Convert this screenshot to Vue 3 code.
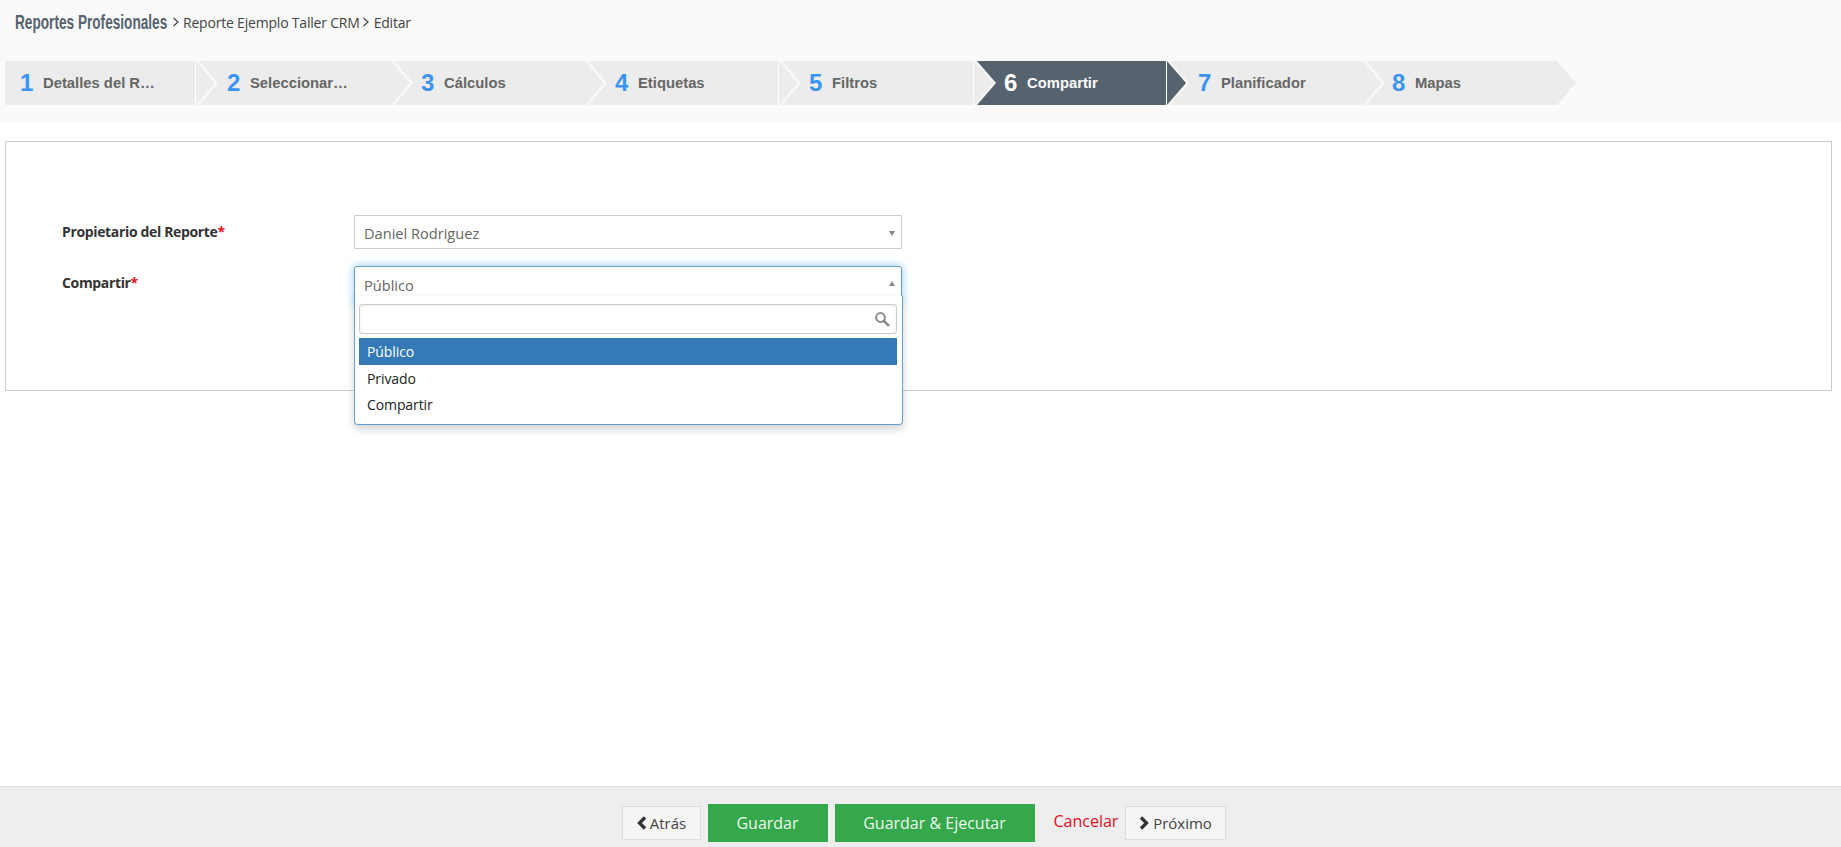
<script setup>
const steps = [
  { n: 1, label: 'Detalles del R…', width: 210, pad: 15, first: true, line: true },
  { n: 2, label: 'Seleccionar…', width: 211, pad: 28 },
  { n: 3, label: 'Cálculos', width: 210, pad: 27 },
  { n: 4, label: 'Etiquetas', width: 210, pad: 27, line: true },
  { n: 5, label: 'Filtros', width: 211, pad: 27, line: true },
  { n: 6, label: 'Compartir', width: 209, pad: 27, active: true, line: true },
  { n: 7, label: 'Planificador', width: 212, pad: 28 },
  { n: 8, label: 'Mapas', width: 210, pad: 26, last: true },
]
const options = ['Público', 'Privado', 'Compartir']
</script>

<template>
  <div class="page">
    <header class="top">
      <nav class="crumbs">
        <div class="crumb-title"><span>Reportes Profesionales</span></div>
        <svg class="crumb-sep" width="8" height="12" viewBox="0 0 8 12"><polyline points="1.5,2 6,6 1.5,10" /></svg>
        <span>Reporte Ejemplo Taller CRM</span>
        <svg class="crumb-sep crumb-sep-tight" width="8" height="12" viewBox="0 0 8 12"><polyline points="1.5,2 6,6 1.5,10" /></svg>
        <span>Editar</span>
      </nav>
      <ol class="steps">
        <li
          v-for="s in steps"
          :key="s.n"
          class="step"
          :class="{ first: s.first, active: s.active, line: s.line }"
          :style="{ width: s.width + 'px', paddingLeft: s.pad + 'px' }"
        >
          <span class="num">{{ s.n }}</span>
          <span class="label">{{ s.label }}</span>
        </li>
      </ol>
    </header>

    <main class="panel">
      <div class="row">
        <label class="field-label">Propietario del Reporte<em>*</em></label>
        <div class="select">
          <span>Daniel Rodriguez</span>
          <i class="caret"></i>
        </div>
      </div>
      <div class="row row-second">
        <label class="field-label">Compartir<em>*</em></label>
        <div class="select open">
          <span>Público</span>
          <i class="caret up"></i>
          <div class="drop">
            <div class="search">
              <svg width="16" height="16" viewBox="0 0 16 16">
                <circle cx="6.5" cy="6.5" r="4.4" />
                <line x1="10" y1="10" x2="14.2" y2="14.2" />
              </svg>
            </div>
            <ul class="opts">
              <li v-for="(o, i) in options" :key="o" :class="{ sel: i === 0 }">{{ o }}</li>
            </ul>
          </div>
        </div>
      </div>
    </main>

    <footer class="bottom">
      <button class="btn ghost back">
        <svg width="12" height="14" viewBox="0 0 12 14"><polyline points="9,1.5 3.5,7 9,12.5" /></svg>
        <span>Atrás</span>
      </button>
      <button class="btn green save">Guardar</button>
      <button class="btn green run">Guardar &amp; Ejecutar</button>
      <a class="cancel">Cancelar</a>
      <button class="btn ghost next">
        <svg width="12" height="14" viewBox="0 0 12 14"><polyline points="3,1.5 8.5,7 3,12.5" /></svg>
        <span>Próximo</span>
      </button>
    </footer>
  </div>
</template>

<style>
html, body { margin: 0; background: #fff; }
</style>

<style scoped>
.page {
  height: 847px;
  display: flex;
  flex-direction: column;
  overflow: hidden;
  font-family: "Open Sans", "Noto Sans", sans-serif;
  font-size: 14px;
  color: #444;
  background: #fff;
}
.top {
  height: 122px;
  background: #fafafa;
  flex: none;
}
.crumbs {
  display: flex;
  align-items: center;
  height: 44px;
  padding-left: 15px;
  color: #444;
  letter-spacing: -0.2px;
}
.crumb-title {
  width: 153px;
  flex: none;
}
.crumb-title span {
  display: inline-block;
  font-family: "Liberation Sans", Arial, sans-serif;
  font-weight: 700;
  font-size: 20.5px;
  color: #56636f;
  letter-spacing: 0;
  white-space: nowrap;
  transform: scaleX(0.665);
  transform-origin: left center;
}
.crumb-sep { margin: 0 3px 0 4px; }
.crumb-sep-tight { margin: 0 4px 0 2px; }
.crumb-sep polyline { fill: none; stroke: #444; stroke-width: 1.2; }
.steps {
  list-style: none;
  display: flex;
  margin: 17px 0 0 5px;
  padding: 0;
  font-family: "Liberation Sans", Arial, sans-serif;
}
.step {
  position: relative;
  flex: none;
  box-sizing: border-box;
  height: 44px;
  margin-left: -16px;
  display: flex;
  align-items: center;
  background: #ececec;
  clip-path: polygon(0 0, calc(100% - 19px) 0, 100% 50%, calc(100% - 19px) 100%, 0 100%, 19px 50%);
}
.step.first {
  margin-left: 0;
  clip-path: polygon(0 0, calc(100% - 19px) 0, 100% 50%, calc(100% - 19px) 100%, 0 100%);
}
.step.line::after {
  content: "";
  position: absolute;
  top: 0;
  bottom: 0;
  right: 19px;
  width: 1px;
  background: #fff;
}
.num {
  font-size: 24px;
  font-weight: 700;
  color: #3b94f2;
  width: 23px;
  flex: none;
  margin-top: -1px;
}
.label {
  font-size: 14.8px;
  font-weight: 700;
  color: #666;
  white-space: nowrap;
  margin-top: -1px;
}
.step.active { background: #56636f; }
.step.active .num,
.step.active .label { color: #fff; }

.panel {
  box-sizing: border-box;
  margin: 19px 9px 0 5px;
  height: 250px;
  flex: none;
  border: 1px solid #ccc;
  padding: 73px 0 0 56px;
  display: flex;
  flex-direction: column;
  gap: 17px;
}
.row { display: flex; align-items: flex-start; }
.field-label {
  width: 292px;
  flex: none;
  font-weight: 700;
  font-size: 14px;
  color: #333;
  line-height: 20px;
  margin-top: 7px;
  letter-spacing: -0.35px;
}
.field-label em { color: #e0101f; font-style: normal; }
.select {
  position: relative;
  box-sizing: border-box;
  width: 548px;
  height: 34px;
  border: 1px solid #ccc;
  padding: 0 9px;
  line-height: 35px;
  font-size: 14.6px;
  color: #666;
  background: #fff;
}
.select.open {
  height: 38px;
  border-color: #6a9fcf;
  border-radius: 3px 3px 0 0;
  box-shadow: 0 0 9px rgba(102, 175, 233, 0.75);
  line-height: 36px;
}
.caret {
  position: absolute;
  right: 6px;
  top: 15px;
  width: 0;
  height: 0;
  border-left: 3.5px solid transparent;
  border-right: 3.5px solid transparent;
  border-top: 5px solid #888;
}
.caret.up {
  top: 14px;
  border-top: 0;
  border-bottom: 5px solid #888;
}
.drop {
  position: absolute;
  z-index: 2;
  left: -1px;
  right: -2px;
  top: 29px;
  box-sizing: border-box;
  height: 129px;
  padding: 8px 5px 0 4px;
  background: #fff;
  border: 1px solid #6a9fcf;
  border-top: 0;
  border-radius: 0 0 4px 4px;
  box-shadow: 0 4px 8px rgba(0, 0, 0, 0.18);
  line-height: normal;
  font-size: 14px;
  color: #222;
}
.search {
  box-sizing: border-box;
  height: 30px;
  border: 1px solid #ccc;
  border-radius: 3px;
  box-shadow: inset 0 1px 2px rgba(0, 0, 0, 0.08);
  display: flex;
  align-items: center;
  justify-content: flex-end;
  padding-right: 6px;
  background: #fff;
}
.search svg { fill: none; stroke: #8a8a8a; stroke-width: 2; }
.search line { stroke-width: 2.6; stroke-linecap: round; }
.opts {
  list-style: none;
  margin: 4px 0 0;
  padding: 0;
  letter-spacing: -0.1px;
}
.opts li {
  height: 26px;
  line-height: 27px;
  padding-left: 8px;
  color: #222;
}
.opts li.sel { height: 27px; background: #337ab7; color: #fff; }

.bottom {
  margin-top: auto;
  box-sizing: border-box;
  height: 61px;
  flex: none;
  background: #eee;
  border-top: 1px solid #e0e0e0;
  display: flex;
  align-items: center;
  justify-content: center;
  font-family: inherit;
  padding: 12px 0 0 6px;
}
.btn {
  font-family: inherit;
  cursor: pointer;
  box-sizing: border-box;
  border: 1px solid #ddd;
  display: inline-flex;
  align-items: center;
  justify-content: center;
}
.ghost {
  height: 34px;
  background: #f5f5f5;
  color: #444;
  font-size: 15px;
  gap: 2px;
  padding-top: 1px;
}
.ghost svg { fill: none; stroke: #333; stroke-width: 3.3; margin-top: -1px; }
.green {
  height: 38px;
  background: #34a84a;
  border-color: #34a84a;
  color: #eef8ee;
  font-size: 16px;
}
.back { width: 79px; margin-right: 7px; }
.save { width: 120px; margin-right: 7px; }
.run { width: 200px; margin-right: 19px; }
.cancel { color: #e0101f; font-size: 16px; width: 71px; margin-top: -4px; }
.next { width: 101px; gap: 3px; }
</style>
